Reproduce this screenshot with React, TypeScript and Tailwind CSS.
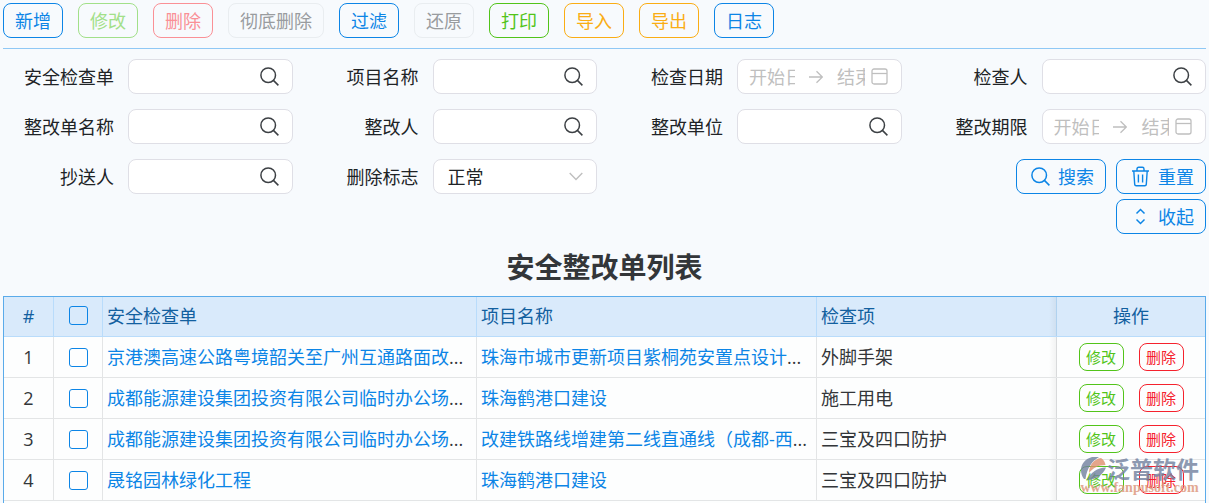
import React from 'react';

const toolbar = [
  { label: '新增', style: 'border-[#0c85e6] text-[#0c85e6]' },
  { label: '修改', style: 'border-[#a2e089] text-[#a2e089]', disabled: true },
  { label: '删除', style: 'border-[#fa9096] text-[#fa9096]', disabled: true },
  { label: '彻底删除', style: 'border-[#e9edf0] text-[#999c9f]', disabled: true },
  { label: '过滤', style: 'border-[#0c85e6] text-[#0c85e6]' },
  { label: '还原', style: 'border-[#e9edf0] text-[#999c9f]', disabled: true },
  { label: '打印', style: 'border-[#52c41a] text-[#52c41a]' },
  { label: '导入', style: 'border-[#faad14] text-[#faad14]' },
  { label: '导出', style: 'border-[#faad14] text-[#faad14]' },
  { label: '日志', style: 'border-[#0c85e6] text-[#0c85e6]' },
];

const rows = [
  { check: '京港澳高速公路粤境韶关至广州互通路面改', checkCut: true, project: '珠海市城市更新项目紫桐苑安置点设计', projectCut: true, item: '外脚手架' },
  { check: '成都能源建设集团投资有限公司临时办公场', checkCut: true, project: '珠海鹤港口建设', projectCut: false, item: '施工用电' },
  { check: '成都能源建设集团投资有限公司临时办公场', checkCut: true, project: '改建铁路线增建第二线直通线（成都-西', projectCut: true, item: '三宝及四口防护' },
  { check: '晟铭园林绿化工程', checkCut: false, project: '珠海鹤港口建设', projectCut: false, item: '三宝及四口防护' },
];

const SearchIcon = () => (
  <svg width="19" height="19" viewBox="0 0 19 19" fill="none" stroke="currentColor" strokeWidth="1.5" className="shrink-0">
    <circle cx="8.2" cy="8.2" r="7.3" />
    <path d="M13.4 13.4 18.4 18.4" />
  </svg>
);

const TrashIcon = () => (
  <svg width="19" height="21" viewBox="0 0 19 21" fill="none" stroke="currentColor" strokeWidth="1.4" className="shrink-0">
    <path d="M1 5h17M6 5V2.9Q6 1.2 7.7 1.2h3.6Q13 1.2 13 2.9V5M2.8 5 3.7 18.4Q3.8 19.8 5.2 19.8h8.6q1.4 0 1.5-1.4L16.2 5M7.4 8.5v8M11.6 8.5v8" />
  </svg>
);

const CollapseIcon = () => (
  <svg width="19" height="19" viewBox="0 0 19 19" fill="none" stroke="currentColor" strokeWidth="1.5" className="shrink-0">
    <path d="M5.5 6.5 9.5 2.5l4 4M5.5 12.5l4 4 4-4" />
  </svg>
);

const fieldBox = 'flex h-[35px] min-w-0 flex-1 items-center rounded-lg border border-[#dfdfe6] bg-white';

const Field: React.FC<{ id: string; label: string; children: React.ReactNode }> = ({ id, label, children }) => (
  <div className="flex items-center gap-[14px] self-start">
    <label htmlFor={id} className="w-[111px] shrink-0 whitespace-nowrap text-right text-[#202326]">{label}</label>
    {children}
  </div>
);

const SearchField: React.FC<{ id: string; label: string }> = ({ id, label }) => (
  <Field id={id} label={label}>
    <div className={`${fieldBox} pl-3 pr-[13px] text-[#3c4044]`}>
      <input id={id} type="text" className="min-w-0 flex-1 outline-none" />
      <SearchIcon />
    </div>
  </Field>
);

const DateRangeField: React.FC<{ id: string; label: string }> = ({ id, label }) => (
  <Field id={id} label={label}>
    <div className={`${fieldBox} pl-[11px] pr-[13px] text-[#bfbfbf]`}>
      <input id={id} type="text" placeholder="开始日期" className="w-0 min-w-0 flex-[5] outline-none placeholder:text-[#bfbfbf]" />
      <svg width="14" height="14" viewBox="0 0 14 14" fill="none" stroke="currentColor" strokeWidth="1.3" className="mx-[14px] shrink-0">
        <path d="M0 7h13.2M7.5 1.2 13.3 7l-5.8 5.8" />
      </svg>
      <input type="text" aria-label={`${label}结束`} placeholder="结束日期" className="w-0 min-w-0 flex-[3] outline-none placeholder:text-[#bfbfbf]" />
      <svg width="17" height="17" viewBox="0 0 17 17" fill="none" stroke="currentColor" strokeWidth="1.3" className="ml-[6px] shrink-0">
        <rect x="1" y="1" width="15" height="15" rx="2" />
        <path d="M1 5.5h15" />
      </svg>
    </div>
  </Field>
);

const formButton = 'flex h-[35px] w-[90px] items-center gap-2 rounded-lg border border-[#0c85e6] pl-[14px] text-[#0c85e6]';
const headCell = 'h-[40px] border-b border-r border-[#b9dcfb] bg-[#d9eafb] px-1 pb-[2px] font-normal text-[#12609f]';
const bodyCell = 'h-[41px] border-b border-r border-[#e3e5e6] bg-[#fdfefe] px-1';
// shade cast by the pinned column on the one before it
const pinned = 'relative border-r-0 before:absolute before:inset-y-0 before:right-full before:w-2 before:bg-linear-to-l before:from-black/5 before:to-transparent';
const rowButton = 'h-[28px] w-[45px] rounded-lg border text-[15px] leading-none';
const checkbox = 'block mx-auto h-[19px] w-[19px] appearance-none rounded-[3px] border border-[#0c85e6] bg-transparent checked:bg-[#0c85e6]';

const Watermark = () => (
  <div className="pointer-events-none absolute bottom-[8px] right-[6px] flex flex-col items-center opacity-80">
    <div className="flex items-center">
      <svg width="27" height="24" viewBox="0 0 27 24">
        <path d="M4 22C-2 14 1 3 12 0h7C12 4 7 11 5.500 22z" fill="#71809f" />
        <path d="M9 16C9 8 14 2 21 1c3 2 4 4 4.500 7C18 8 13 11 9 16z" fill="#e08f6e" />
        <path d="M7 23C11 15 17 11 26 10.500 23 18 16 23 7 23z" fill="#71809f" />
      </svg>
      <span className="text-[23px] font-bold leading-6 text-[#71809f]">泛普软件</span>
    </div>
    <span className="font-['Liberation_Serif',serif] text-sm font-bold leading-[14px] text-[#dc9478]">www.fanpusoft.com</span>
  </div>
);

export default function App() {
  return (
    <div className="flex min-h-screen flex-col bg-[#f7fafd] px-[3px] pt-[3px] font-['Open_Sans','Noto_Sans_CJK_SC',sans-serif] text-[18px] leading-6 text-[#333639]">
      <div className="flex flex-wrap gap-[15px] border-b border-[#8fc8f5] pb-[10px]">
        {toolbar.map((b) => (
          <button key={b.label} type="button" disabled={b.disabled} className={`h-[35px] rounded-lg border px-[11px] ${b.style}`}>
            {b.label}
          </button>
        ))}
      </div>

      <form className="grid grid-cols-4 gap-[15px] pt-[10px]" onSubmit={(e) => e.preventDefault()}>
        <SearchField id="check" label="安全检查单" />
        <SearchField id="project" label="项目名称" />
        <DateRangeField id="checkDate" label="检查日期" />
        <SearchField id="checker" label="检查人" />
        <SearchField id="rectify" label="整改单名称" />
        <SearchField id="rectifier" label="整改人" />
        <SearchField id="unit" label="整改单位" />
        <DateRangeField id="deadline" label="整改期限" />
        <SearchField id="cc" label="抄送人" />
        <Field id="deleted" label="删除标志">
          <div className={`${fieldBox} relative`}>
            <select id="deleted" className="h-full w-full appearance-none rounded-lg bg-transparent pl-[14px] text-[#202326] outline-none">
              <option>正常</option>
            </select>
            <svg width="14" height="9" viewBox="0 0 14 9" fill="none" stroke="#bfbfbf" strokeWidth="1.4" className="pointer-events-none absolute right-[13px]">
              <path d="M.7 1 7 7.5 13.3 1" />
            </svg>
          </div>
        </Field>
        <div className="col-start-4 flex w-[190px] flex-wrap justify-end gap-x-[10px] gap-y-[5px] justify-self-end">
          <button type="submit" className={formButton}><SearchIcon />搜索</button>
          <button type="reset" className={formButton}><TrashIcon />重置</button>
          <button type="button" className={formButton}><CollapseIcon />收起</button>
        </div>
      </form>

      <h1 className="pb-[11px] pt-[15px] text-center text-[28px] font-bold leading-9">安全整改单列表</h1>

      <div className="relative flex-1 border border-b-0 border-[#5aabea] bg-[#fdfefe]">
        <table className="w-full table-fixed border-separate border-spacing-0 text-left">
          <colgroup>
            <col className="w-[50px]" />
            <col className="w-[49px]" />
            <col className="w-[374px]" />
            <col className="w-[340px]" />
            <col />
            <col className="w-[148px]" />
          </colgroup>
          <thead>
            <tr>
              <th className={`${headCell} text-center`}>#</th>
              <th className={headCell}><input type="checkbox" aria-label="全选" className={checkbox} /></th>
              <th className={headCell}>安全检查单</th>
              <th className={headCell}>项目名称</th>
              <th className={headCell}>检查项</th>
              <th className={`${headCell} ${pinned} text-center`}>操作</th>
            </tr>
          </thead>
          <tbody>
            {rows.map((row, i) => (
              <tr key={i}>
                <td className={`${bodyCell} text-center`}>{i + 1}</td>
                <td className={bodyCell}><input type="checkbox" aria-label={`选择第${i + 1}行`} className={checkbox} /></td>
                <td className={`${bodyCell} truncate`}>
                  <a href="#" className="text-[#0c85e6]">{row.check}</a>{row.checkCut && '...'}
                </td>
                <td className={`${bodyCell} truncate`}>
                  <a href="#" className="text-[#0c85e6]">{row.project}</a>{row.projectCut && '...'}
                </td>
                <td className={`${bodyCell} truncate`}>{row.item}</td>
                <td className={`${bodyCell} ${pinned}`}>
                  <div className="flex justify-center gap-[15px]">
                    <button type="button" className={`${rowButton} border-[#52c41a] text-[#52c41a]`}>修改</button>
                    <button type="button" className={`${rowButton} border-[#f5222d] text-[#f5222d]`}>删除</button>
                  </div>
                </td>
              </tr>
            ))}
          </tbody>
        </table>
        <Watermark />
      </div>
    </div>
  );
}
